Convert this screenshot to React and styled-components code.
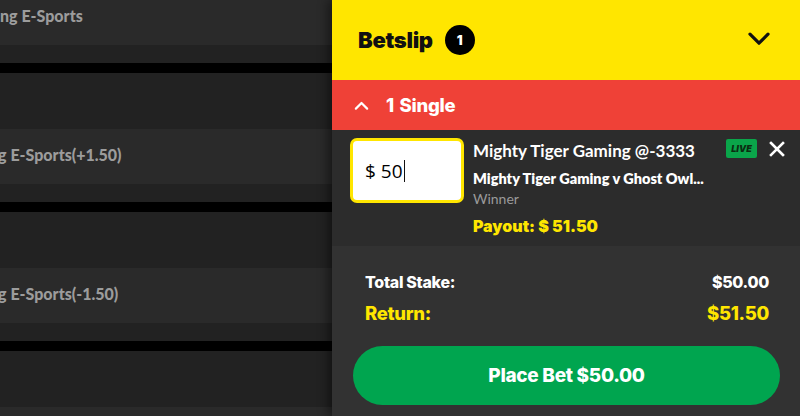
import React from "react";
import styled, { createGlobalStyle } from "styled-components";

const GlobalStyle = createGlobalStyle`
  html, body {
    margin: 0;
    padding: 0;
    background: #222;
  }
  body {
    font-family: Lato, "Open Sans", "Liberation Sans", sans-serif;
  }
`;

const heavy = `Inter, "Open Sans", "Liberation Sans", sans-serif`;

const markets = [
  { id: 1, label: "Ghost Owl Gaming E-Sports", shift: 118 },
  { id: 2, label: "Ghost Owl Gaming E-Sports(+1.50)", shift: 129 },
  { id: 3, label: "Ghost Owl Gaming E-Sports(-1.50)", shift: 129 },
  { id: 4, label: "", shift: 0 },
];

// Chevron used in betslip header and the single bar
function Chevron({ up, size = 24, stroke = 3.2, color = "#111" }) {
  return (
    <svg width={size} height={size * 0.6} viewBox="0 0 24 14" fill="none">
      <path
        d={up ? "M3 12 L12 3 L21 12" : "M3 2 L12 11 L21 2"}
        stroke={color}
        strokeWidth={stroke}
        strokeLinecap="round"
        strokeLinejoin="round"
      />
    </svg>
  );
}

function CloseIcon() {
  return (
    <svg width="16" height="16" viewBox="0 0 16 16" fill="none">
      <path d="M2 2 L14 14 M14 2 L2 14" stroke="#fff" strokeWidth="2.6" strokeLinecap="square" />
    </svg>
  );
}

function App() {
  return (
    <>
      <GlobalStyle />
      <Page>
        <Markets>
          <MarketList>
            {markets.map((m) => (
              <Market key={m.id}>
                <MarketHead />
                <Selection>
                  <Label $shift={m.shift}>{m.label}</Label>
                </Selection>
                <MarketFoot />
                <Divider />
              </Market>
            ))}
          </MarketList>
        </Markets>

        <Betslip>
          <Header>
            <Title>Betslip</Title>
            <Count>1</Count>
            <Toggle>
              <Chevron size={24} />
            </Toggle>
          </Header>

          <SingleBar>
            <Chevron up size={15} stroke={3.4} color="#fff" />
            <span>1 Single</span>
          </SingleBar>

          <Card>
            <Stake>
              $ 50<Caret />
            </Stake>
            <Info>
              <TopRow>
                <SelName>Mighty Tiger Gaming @-3333</SelName>
                <Live>LIVE</Live>
                <Close>
                  <CloseIcon />
                </Close>
              </TopRow>
              <Event>Mighty Tiger Gaming v Ghost Owl...</Event>
              <MarketName>Winner</MarketName>
              <Payout>Payout: $ 51.50</Payout>
            </Info>
          </Card>

          <Summary>
            <SumRow>
              <span>Total Stake:</span>
              <span>$50.00</span>
            </SumRow>
            <SumRow $accent>
              <span>Return:</span>
              <span>$51.50</span>
            </SumRow>
            <PlaceBet>Place Bet $50.00</PlaceBet>
          </Summary>
        </Betslip>
      </Page>
    </>
  );
}

const Page = styled.div`
  display: flex;
  width: 800px;
  height: 416px;
  overflow: hidden;
`;

const Markets = styled.div`
  flex: 1;
  overflow: hidden;
  background: #222;
`;

/* list is scrolled down a bit */
const MarketList = styled.div`
  margin-top: -66px;
`;

const Market = styled.div`
  display: flex;
  flex-direction: column;
`;

const MarketHead = styled.div`
  height: 56px;
  background: #222;
`;

const Selection = styled.div`
  height: 55px;
  box-sizing: border-box;
  padding-bottom: 5px;
  background: #2a2a2a;
  display: flex;
  align-items: center;
  overflow: hidden;
`;

const Label = styled.span`
  margin-left: ${(p) => -p.$shift}px;
  white-space: nowrap;
  color: #9c9c9c;
  font-size: 16px;
  font-weight: 900;
`;

const MarketFoot = styled.div`
  height: 18px;
  background: #222;
`;

const Divider = styled.div`
  height: 10px;
  background: #000;
`;

const Betslip = styled.div`
  width: 468px;
  display: flex;
  flex-direction: column;
  background: #323232;
  box-shadow: -4px 0 10px rgba(0, 0, 0, 0.45);
  z-index: 1;
`;

const Header = styled.div`
  height: 80px;
  box-sizing: border-box;
  padding: 0 29px 1px 26px;
  background: #ffe600;
  display: flex;
  align-items: center;
`;

const Title = styled.div`
  font-family: ${heavy};
  font-size: 22px;
  font-weight: 900;
  letter-spacing: -0.3px;
  color: #111;
`;

const Count = styled.div`
  width: 30px;
  height: 30px;
  border-radius: 50%;
  background: #000;
  color: #fff;
  margin-left: 12px;
  display: flex;
  align-items: center;
  justify-content: center;
  font-family: ${heavy};
  font-size: 13px;
  font-weight: 900;
`;

const Toggle = styled.div`
  margin-left: auto;
  display: flex;
`;

const SingleBar = styled.div`
  height: 50px;
  background: #ef4137;
  display: flex;
  align-items: center;
  gap: 17px;
  padding-left: 22px;
  color: #fff;
  font-family: ${heavy};
  font-size: 18.5px;
  font-weight: 800;
  letter-spacing: -0.3px;
  word-spacing: 2px;
`;

const Card = styled.div`
  height: 116px;
  box-sizing: border-box;
  background: #2c2c2c;
  display: flex;
  align-items: flex-start;
  padding: 8px 15px 0 18px;
  gap: 9px;
`;

const Stake = styled.div`
  width: 114px;
  height: 65px;
  box-sizing: border-box;
  border: 3px solid #ffe600;
  border-radius: 7px;
  background: #fff;
  display: flex;
  align-items: center;
  padding-left: 12px;
  font-family: "Open Sans", "Liberation Sans", sans-serif;
  font-size: 19px;
  font-weight: 500;
  color: #000;
`;

const Caret = styled.span`
  width: 1.5px;
  height: 22px;
  background: #111;
  margin-left: 1px;
`;

const Info = styled.div`
  flex: 1;
  display: flex;
  flex-direction: column;
  padding-top: 1px;
`;

const TopRow = styled.div`
  display: flex;
  align-items: flex-start;
`;

const SelName = styled.div`
  flex: 1;
  color: #fff;
  font-size: 17px;
  font-weight: 700;
  line-height: 24px;
`;

const Live = styled.div`
  width: 31px;
  height: 19px;
  background: #0aa54a;
  border-radius: 2px;
  color: #0b2e12;
  font-family: ${heavy};
  font-size: 9px;
  font-weight: 900;
  font-style: italic;
  display: flex;
  align-items: center;
  justify-content: center;
`;

const Close = styled.div`
  margin-left: 12px;
  margin-top: 2px;
  display: flex;
`;

const Event = styled.div`
  color: #fff;
  font-size: 14.5px;
  font-weight: 800;
  line-height: 20px;
  margin-top: 6px;
`;

const MarketName = styled.div`
  color: #9a9a9a;
  font-size: 14px;
  line-height: 18px;
  margin-top: 1px;
`;

const Payout = styled.div`
  color: #ffe600;
  font-family: ${heavy};
  font-size: 16px;
  font-weight: 900;
  line-height: 20px;
  margin-top: 8px;
`;

const Summary = styled.div`
  flex: 1;
  background: #323232;
  display: flex;
  flex-direction: column;
  padding: 26px 20px 0 21px;
`;

const SumRow = styled.div`
  display: flex;
  justify-content: space-between;
  padding: 0 11px 0 12px;
  color: ${(p) => (p.$accent ? "#ffe600" : "#fff")};
  font-family: ${heavy};
  font-size: ${(p) => (p.$accent ? "18.5px" : "16px")};
  font-weight: 800;
  letter-spacing: -0.3px;
  line-height: ${(p) => (p.$accent ? "22px" : "20px")};
  margin-bottom: 10px;
`;

const PlaceBet = styled.button`
  margin-top: 12px;
  height: 59px;
  border: none;
  border-radius: 30px;
  background: #00a54f;
  color: #fff;
  font-family: ${heavy};
  font-size: 19px;
  font-weight: 800;
  letter-spacing: -0.3px;
  cursor: pointer;
`;

export default App;
